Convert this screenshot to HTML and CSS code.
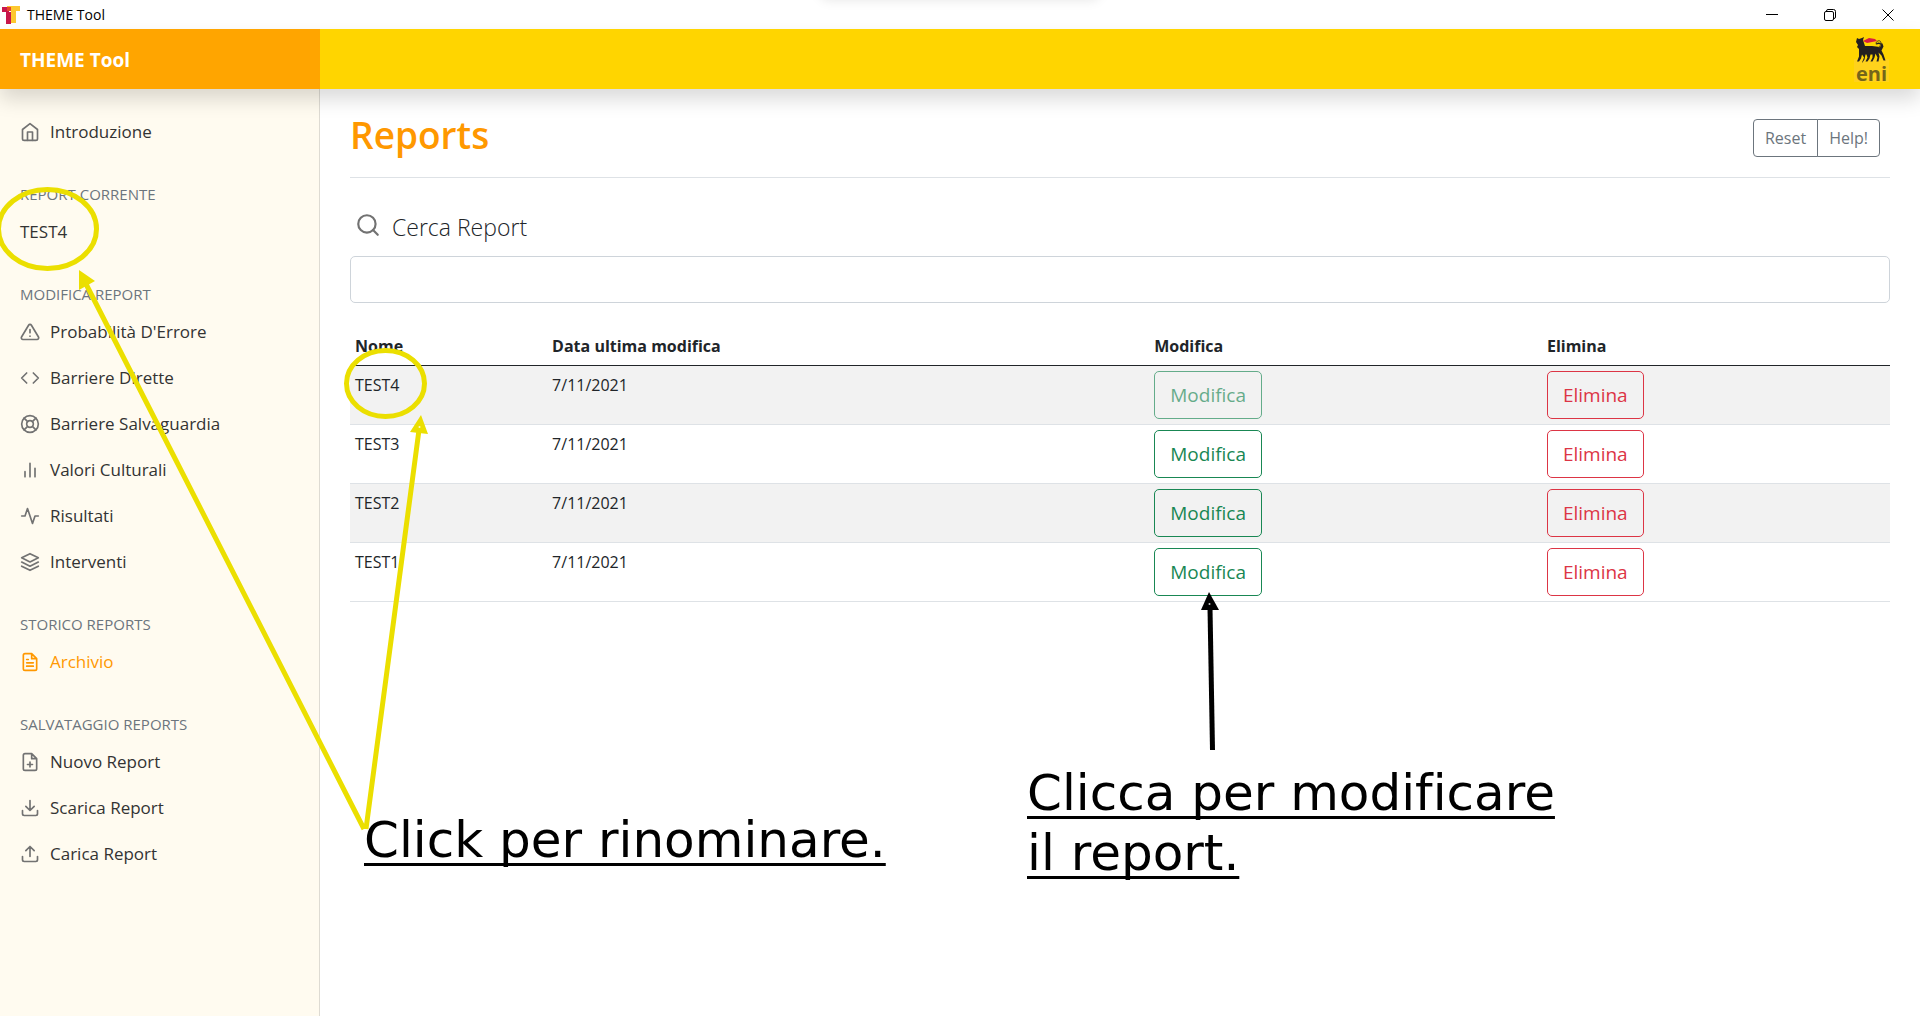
FILE: index.html
```html
<!DOCTYPE html>
<html lang="it">
<head>
<meta charset="utf-8">
<title>THEME Tool</title>
<link rel="stylesheet" href="styles.css">
</head>
<body>
<div class="titlebar">
  <svg class="app-icon" viewBox="0 0 18 18" aria-hidden="true">
    <path fill="#c8174b" d="M0 1h7v5h2v12H4V6H0z"/>
    <path fill="#fdc82f" d="M5 0h13v5h-4v12H9V5H5z"/>
    <path fill="#e8452c" d="M5 1h4v4H5z"/>
  </svg>
  <span class="app-name">THEME Tool</span>
  <div class="window-buttons">
    <button type="button" aria-label="Riduci"><svg viewBox="0 0 12 12"><path d="M0 5.500h12"/></svg></button>
    <button type="button" aria-label="Ripristina"><svg viewBox="0 0 12 12"><rect x=".5" y="2.500" width="9" height="9" rx="1.500"/><path d="M2.500 2.500V2q0-1.500 1.500-1.500h5.500q2 0 2 2V8q0 1.500-1.500 1.500"/></svg></button>
    <button type="button" aria-label="Chiudi"><svg viewBox="0 0 12 12"><path d="M.5.5l11 11M11.500.5l-11 11"/></svg></button>
  </div>
</div>
<header class="navbar">
  <a class="brand" href="#">THEME Tool</a>
  <svg class="logo" viewBox="0 -5 36 60" role="img" aria-label="eni">
    <path fill="#ffd21c" d="M0 25h35v23H0z"/>
    <path fill="#231f20" d="M3 4l2 1 3-1 2-1-1 3 1 3 1 3h7l8 1 1-2-2-1-3 .5-.5-1 3-1 4 1 1 3-2 4 2 4 2 6h-2l-2-5-3-3 1 4-1 5h-2l1-4-2-4-1 4-2 4h-2l2-4v-3h-2l-1 4-2 3h-2l2-4-1-3h-1l-1 5-2 3H8l2-5-2-3-1 4-2 3H3l2-5V15L3 13l1-2-2-3z"/>
    <path fill="none" stroke="#54461a" d="M22 9c1-3 5-3 5 0s-2 3-2 5"/>
    <path fill="#d91b43" d="M9 7l6-3 6 1 2 2-5 1-5 1z"/>
    <text x="2" y="47">eni</text>
  </svg>
</header>
<div class="shell">
  <nav class="sidebar">
    <ul>
      <li><a href="#"><svg class="icon" viewBox="0 0 24 24"><path d="M3 9l9-7 9 7v11a2 2 0 0 1-2 2H5a2 2 0 0 1-2-2z"/><path d="M9 22V12h6v10"/></svg>Introduzione</a></li>
    </ul>
    <h2>Report corrente</h2>
    <ul>
      <li><a href="#">TEST4</a></li>
    </ul>
    <h2>Modifica report</h2>
    <ul>
      <li><a href="#"><svg class="icon" viewBox="0 0 24 24"><path d="M10.290 3.860L1.820 18a2 2 0 0 0 1.710 3h16.940a2 2 0 0 0 1.710-3L13.710 3.860a2 2 0 0 0-3.420 0zM12 9v4M12 17h.01"/></svg>Probabilità D'Errore</a></li>
      <li><a href="#"><svg class="icon" viewBox="0 0 24 24"><path d="M16 18l6-6-6-6M8 6l-6 6 6 6"/></svg>Barriere Dirette</a></li>
      <li><a href="#"><svg class="icon" viewBox="0 0 24 24"><circle cx="12" cy="12" r="10"/><circle cx="12" cy="12" r="4"/><path d="M4.930 4.930l4.240 4.240M14.830 14.830l4.240 4.240M14.830 9.170l4.240-4.240M4.930 19.070l4.240-4.240"/></svg>Barriere Salvaguardia</a></li>
      <li><a href="#"><svg class="icon" viewBox="0 0 24 24"><path d="M18 20V10M12 20V4M6 20v-6"/></svg>Valori Culturali</a></li>
      <li><a href="#"><svg class="icon" viewBox="0 0 24 24"><path d="M22 12h-4l-3 9L9 3l-3 9H2"/></svg>Risultati</a></li>
      <li><a href="#"><svg class="icon" viewBox="0 0 24 24"><path d="M12 2L2 7l10 5 10-5-10-5zM2 17l10 5 10-5M2 12l10 5 10-5"/></svg>Interventi</a></li>
    </ul>
    <h2>Storico reports</h2>
    <ul>
      <li><a class="active" href="#"><svg class="icon" viewBox="0 0 24 24"><path d="M14 2H6a2 2 0 0 0-2 2v16a2 2 0 0 0 2 2h12a2 2 0 0 0 2-2V8zM14 2v6h6M16 13H8M16 17H8M10 9H8"/></svg>Archivio</a></li>
    </ul>
    <h2>Salvataggio reports</h2>
    <ul>
      <li><a href="#"><svg class="icon" viewBox="0 0 24 24"><path d="M14 2H6a2 2 0 0 0-2 2v16a2 2 0 0 0 2 2h12a2 2 0 0 0 2-2V8zM14 2v6h6M12 18v-6M9 15h6"/></svg>Nuovo Report</a></li>
      <li><a href="#"><svg class="icon" viewBox="0 0 24 24"><path d="M21 15v4a2 2 0 0 1-2 2H5a2 2 0 0 1-2-2v-4M7 10l5 5 5-5M12 15V3"/></svg>Scarica Report</a></li>
      <li><a href="#"><svg class="icon" viewBox="0 0 24 24"><path d="M21 15v4a2 2 0 0 1-2 2H5a2 2 0 0 1-2-2v-4M17 8l-5-5-5 5M12 3v12"/></svg>Carica Report</a></li>
    </ul>
  </nav>
  <main class="content">
    <div class="page-head">
      <h1>Reports</h1>
      <div class="btn-group">
        <button type="button">Reset</button>
        <button type="button">Help!</button>
      </div>
    </div>
    <label class="search-label" for="search">
      <svg class="icon icon-search" viewBox="0 0 24 24"><circle cx="11" cy="11" r="8"/><path d="M21 21l-4.350-4.350"/></svg>
      Cerca Report
    </label>
    <input class="search-input" id="search" type="text">
    <table class="reports">
      <colgroup><col class="col-name"><col class="col-date"><col class="col-edit"><col></colgroup>
      <thead>
        <tr><th scope="col">Nome</th><th scope="col">Data ultima modifica</th><th scope="col">Modifica</th><th scope="col">Elimina</th></tr>
      </thead>
      <tbody>
        <tr><td>TEST4</td><td>7/11/2021</td><td><button type="button" class="btn edit" disabled>Modifica</button></td><td><button type="button" class="btn delete">Elimina</button></td></tr>
        <tr><td>TEST3</td><td>7/11/2021</td><td><button type="button" class="btn edit">Modifica</button></td><td><button type="button" class="btn delete">Elimina</button></td></tr>
        <tr><td>TEST2</td><td>7/11/2021</td><td><button type="button" class="btn edit">Modifica</button></td><td><button type="button" class="btn delete">Elimina</button></td></tr>
        <tr><td>TEST1</td><td>7/11/2021</td><td><button type="button" class="btn edit">Modifica</button></td><td><button type="button" class="btn delete">Elimina</button></td></tr>
      </tbody>
    </table>
  </main>
</div>
<svg class="marks" width="1900" height="900" aria-hidden="true">
  <g fill="none" stroke="#ebdf00" stroke-width="5">
    <ellipse cx="47.500" cy="229" rx="49" ry="39.500"/>
    <ellipse cx="385.500" cy="383.500" rx="39" ry="33"/>
    <path d="M364 829L86 284M366 829L419 430"/>
  </g>
  <path fill="#ebdf00" d="M79 270l16 11-16 9zM421 415l7 19-18-2z"/>
  <path stroke="#000" stroke-width="5" d="M1212.500 750L1210 608"/>
  <path d="M1209 592l10 18h-18z"/>
  <g fill="#fff" opacity=".8"><circle cx="419.500" cy="427" r="1"/><circle cx="1209.500" cy="604" r="1"/></g>
</svg>
<p class="note note-rename">Click per rinominare.</p>
<p class="note note-edit">Clicca per modificare<br>il report.</p>
</body>
</html>
```
FILE: styles.css
```css
* { box-sizing: border-box; }

body {
  margin: 0;
  min-height: 100vh;
  display: flex;
  flex-direction: column;
  position: relative;
  overflow-x: hidden;
  background: #fff;
  color: #212529;
  font-family: "Open Sans", "Noto Sans", sans-serif;
  font-size: 16px;
  font-variant-ligatures: none;
  line-height: 30px;
}

button, input { font: inherit; }
h1, h2, p, ul { margin: 0; padding: 0; }
ul { list-style: none; }
a { color: inherit; text-decoration: none; }

/* Window title bar */
.titlebar {
  position: relative;
  display: flex;
  align-items: center;
  height: 29px;
  padding-left: 2px;
  overflow: hidden;
  color: #000;
  font-size: 14px;
}
.titlebar::before {
  content: "";
  position: absolute;
  left: 50%;
  top: -20px;
  width: 280px;
  height: 20px;
  margin-left: -140px;
  border-radius: 8px;
  box-shadow: 0 0 12px rgba(0, 0, 0, .1);
}
.app-icon { width: 18px; height: 18px; }
.app-name { margin-left: 7px; }
.window-buttons {
  display: flex;
  margin-left: auto;
  padding-right: 3px;
}
.window-buttons button {
  display: grid;
  place-items: center;
  width: 58px;
  height: 28px;
  padding: 0;
  border: 0;
  background: none;
}
.window-buttons svg {
  width: 12px;
  height: 12px;
  fill: none;
  stroke: #000;
}

/* Application header */
.navbar {
  position: relative;
  z-index: 2;
  display: flex;
  align-items: center;
  justify-content: space-between;
  height: 60px;
  padding-right: 30px;
  background: #ffd500;
  box-shadow: 0 10px 20px rgba(0, 0, 0, .15);
}
.brand {
  width: 320px;
  height: 60px;
  padding-left: 20px;
  background: #ffa500;
  color: #fff;
  font-size: 19px;
  font-weight: 700;
  line-height: 62px;
}
.logo { width: 36px; height: 60px; }
.logo text {
  font-family: "Open Sans", sans-serif;
  font-size: 20px;
  font-weight: 700;
  fill: #75651a;
}

/* Sidebar */
.shell { display: flex; flex: 1; }
.sidebar {
  flex: 0 0 320px;
  padding: 20px 0;
  border-right: 1px solid #dedbd3;
  background: #fffbf0;
}
.sidebar h2 {
  height: 54px;
  padding: 25px 20px 0;
  color: #6c757d;
  font-size: 15px;
  font-weight: 400;
  line-height: 28px;
  text-transform: uppercase;
}
.sidebar a {
  display: flex;
  align-items: center;
  gap: 10px;
  height: 46px;
  padding: 0 20px;
  color: #333;
  font-size: 17px;
  font-weight: 500;
}
.icon {
  width: 20px;
  height: 20px;
  fill: none;
  stroke: #727272;
  stroke-width: 2;
  stroke-linecap: round;
  stroke-linejoin: round;
}
.sidebar .active { color: #ff9800; }
.active .icon { stroke: #ff9800; }

/* Page content */
.content {
  flex: 1;
  min-width: 0;
  padding: 20px 30px;
}
.page-head {
  display: flex;
  align-items: flex-start;
  justify-content: space-between;
  height: 69px;
  padding-right: 10px;
  border-bottom: 1px solid #dee2e6;
}
.page-head h1 {
  color: #ff9800;
  font-size: 37px;
  font-weight: 600;
  line-height: 52px;
}
.btn-group { display: flex; margin-top: 10px; }
.btn-group button {
  height: 38px;
  padding: 0 11px;
  border: 1px solid #6c757d;
  border-radius: 4px 0 0 4px;
  background: #fff;
  color: #6c757d;
  font-weight: 400;
}
.btn-group button + button {
  margin-left: -1px;
  border-radius: 0 4px 4px 0;
}
.search-label {
  display: flex;
  align-items: center;
  gap: 11px;
  height: 58px;
  margin-top: 20px;
  padding-left: 5px;
  font-size: 23px;
  font-weight: 300;
}
.icon-search { width: 26px; height: 26px; margin-bottom: 4px; }
.search-input {
  display: block;
  width: 100%;
  height: 47px;
  padding: 8px 15px;
  border: 1px solid #ced4da;
  border-radius: 5px;
}

/* Reports table */
.reports {
  width: 100%;
  margin-top: 24px;
  border-collapse: collapse;
  table-layout: fixed;
}
.col-name { width: 12.8%; }
.col-date { width: 39.1%; }
.col-edit { width: 25.5%; }
.reports th, .reports td {
  padding: 5px;
  border-bottom: 1px solid #dee2e6;
  line-height: 28px;
  text-align: left;
  vertical-align: top;
}
.reports th {
  border-bottom-color: #212529;
  font-weight: 700;
}
.reports tbody tr:nth-child(odd) { background: #f2f2f2; }
.btn {
  display: block;
  height: 48px;
  padding: 0 15px;
  border: 1px solid;
  border-radius: 5px;
  background: none;
  font-size: 19px;
  font-weight: 400;
}
.edit { color: #198754; }
.edit:disabled { opacity: .65; }
.delete { color: #dc3545; }

/* Tutorial notes laid over the page */
.marks {
  position: absolute;
  left: 0;
  top: 0;
  z-index: 3;
  pointer-events: none;
}
.note {
  position: absolute;
  z-index: 4;
  color: #000;
  font-family: "DejaVu Sans", sans-serif;
  font-size: 50px;
  line-height: 60px;
  white-space: nowrap;
  text-decoration: underline;
  text-decoration-thickness: 3px;
  text-underline-offset: 6px;
  text-decoration-skip-ink: none;
}
.note-rename { left: 364px; top: 810px; }
.note-edit { left: 1027px; top: 763px; }
```
